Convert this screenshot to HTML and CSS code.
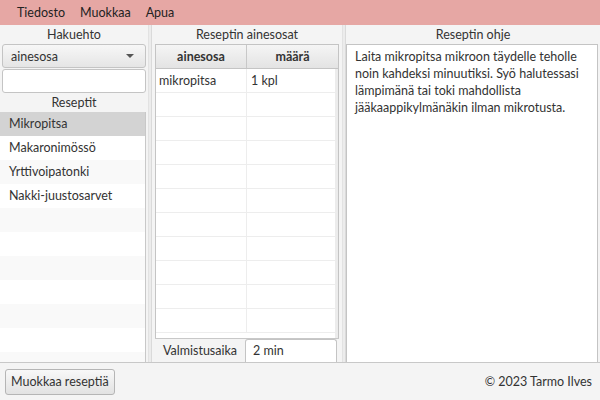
FILE: index.html
```html
<!DOCTYPE html>
<html lang="fi">
<head>
<meta charset="utf-8">
<title>Reseptit</title>
<link rel="stylesheet" href="styles.css">
</head>
<body>
<div class="app">
  <nav class="menubar">
    <span class="menu">Tiedosto</span>
    <span class="menu">Muokkaa</span>
    <span class="menu">Apua</span>
  </nav>
  <div class="split">
    <section class="pane pane-left">
      <div class="label">Hakuehto</div>
      <div class="combo"><span>ainesosa</span><span class="arrow"></span></div>
      <div class="field"></div>
      <div class="label">Reseptit</div>
      <ul class="list">
        <li class="sel">Mikropitsa</li>
        <li>Makaronimössö</li>
        <li>Yrttivoipatonki</li>
        <li>Nakki-juustosarvet</li>
        <li></li><li></li><li></li><li></li><li></li><li></li><li></li>
      </ul>
    </section>
    <div class="divider"></div>
    <section class="pane pane-mid">
      <div class="label">Reseptin ainesosat</div>
      <div class="table">
        <div class="thead">
          <div class="th">ainesosa</div>
          <div class="th">määrä</div>
        </div>
        <div class="tbody">
          <div class="tr"><div class="td">mikropitsa</div><div class="td">1 kpl</div></div>
          <div class="tr"><div class="td"></div><div class="td"></div></div>
          <div class="tr"><div class="td"></div><div class="td"></div></div>
          <div class="tr"><div class="td"></div><div class="td"></div></div>
          <div class="tr"><div class="td"></div><div class="td"></div></div>
          <div class="tr"><div class="td"></div><div class="td"></div></div>
          <div class="tr"><div class="td"></div><div class="td"></div></div>
          <div class="tr"><div class="td"></div><div class="td"></div></div>
          <div class="tr"><div class="td"></div><div class="td"></div></div>
          <div class="tr"><div class="td"></div><div class="td"></div></div>
          <div class="tr"><div class="td"></div><div class="td"></div></div>
        </div>
      </div>
      <div class="timerow">
        <div class="timelabel">Valmistusaika</div>
        <div class="timefield">2 min</div>
      </div>
    </section>
    <div class="divider"></div>
    <section class="pane pane-right">
      <div class="label">Reseptin ohje</div>
      <div class="textarea">Laita mikropitsa mikroon täydelle teholle noin kahdeksi minuutiksi. Syö halutessasi lämpimänä tai toki mahdollista jääkaappikylmänäkin ilman mikrotusta.</div>
    </section>
  </div>
  <footer class="bottombar">
    <button class="btn">Muokkaa reseptiä</button>
    <span class="copy">© 2023 Tarmo Ilves</span>
  </footer>
</div>
</body>
</html>
```

FILE: styles.css
```css
* { box-sizing: border-box; }
html, body { margin: 0; padding: 0; }
body {
  font-family: "Lato", "Open Sans", sans-serif;
  font-size: 12.5px;
  color: #333;
  background: #f4f4f4;
}
.app {
  width: 600px;
  height: 400px;
  display: flex;
  flex-direction: column;
  overflow: hidden;
}
.menubar {
  height: 25px;
  background: #e6a7a4;
  display: flex;
  align-items: center;
  padding-left: 10px;
}
.menu {
  padding: 0 7px;
  margin-right: 1px;
  color: #222;
}
.split {
  height: 338px;
  display: flex;
  border-bottom: 1px solid #c8c8c8;
}
.divider {
  width: 4px;
  background: #ececec;
  border-left: 1px solid #e2e2e2;
  border-right: 1px solid #dadada;
}
.pane {
  display: flex;
  flex-direction: column;
  min-width: 0;
}
.pane-left { width: 148px; }
.pane-mid { width: 190px; }
.pane-right { flex: 1; }
.label {
  height: 19px;
  line-height: 19px;
  text-align: center;
  color: #333;
  flex: none;
}
.combo {
  margin: 0 2px;
  height: 24px;
  border: 1px solid #c4c4c4;
  border-radius: 3px;
  background: linear-gradient(#f7f7f7, #e5e5e5);
  display: flex;
  align-items: center;
  justify-content: space-between;
  padding: 0 8px;
  flex: none;
}
.arrow {
  width: 0;
  height: 0;
  border-left: 4px solid transparent;
  border-right: 4px solid transparent;
  border-top: 4px solid #555;
  margin-right: 3px;
}
.field {
  margin: 1px 2px 0;
  height: 24px;
  border: 1px solid #c4c4c4;
  border-radius: 3px;
  background: #fff;
  flex: none;
}
.list {
  list-style: none;
  margin: 0 2px 0 0;
  padding: 0;
  flex: 1;
  overflow: hidden;
  border-right: 1px solid #c8c8c8;
  background: #fff;
}
.list li {
  height: 24px;
  line-height: 24px;
  padding-left: 9px;
  color: #333;
}
.list li:nth-child(odd) { background: #f9f9f9; }
.list li.sel { background: #d3d3d3; }
.table {
  margin: 0 3px;
  flex: 1;
  display: flex;
  flex-direction: column;
  border: 1px solid #c4c4c4;
  border-bottom: none;
  background: #fff;
  overflow: hidden;
}
.thead {
  display: grid;
  grid-template-columns: 90px 1fr;
  height: 24px;
  flex: none;
  background: linear-gradient(#f5f5f5, #e3e3e3);
  border-bottom: 1px solid #c4c4c4;
}
.th {
  font-weight: bold;
  text-align: center;
  line-height: 23px;
  color: #333;
}
.th + .th { border-left: 1px solid #c8c8c8; }
.tbody {
  flex: 1;
  overflow: hidden;
  border-right: 3px solid #ececec;
}
.tr {
  display: grid;
  grid-template-columns: 90px 1fr;
  height: 24px;
  border-bottom: 1px solid #ededed;
}
.td {
  line-height: 23px;
  padding-left: 3px;
  color: #333;
}
.td + .td { border-left: 1px solid #ededed; padding-left: 4px; }
.timerow {
  display: flex;
  height: 24px;
  flex: none;
  margin: 0 3px;
  border-top: 1px solid #c8c8c8;
}
.timelabel {
  width: 90px;
  line-height: 23px;
  padding-left: 8px;
  color: #333;
}
.timefield {
  flex: 1;
  margin-right: 2px;
  background: #fff;
  border: 1px solid #c4c4c4;
  border-radius: 3px 3px 0 0;
  border-bottom: none;
  line-height: 22px;
  padding-left: 7px;
}
.textarea {
  flex: 1;
  margin-right: 2px;
  border: 1px solid #c4c4c4;
  border-bottom: none;
  background: #fff;
  padding: 3px 10px 0 8px;
  line-height: 17px;
  color: #333;
}
.bottombar {
  flex: 1;
  display: flex;
  align-items: center;
  justify-content: space-between;
  padding: 0 8px 0 5px;
}
.btn {
  font-family: inherit;
  font-size: 12.5px;
  color: #333;
  height: 26px;
  padding: 0 5px;
  border: 1px solid #b5b5b5;
  border-radius: 3px;
  background: linear-gradient(#f8f8f8, #e2e2e2);
}
.copy { color: #333; }
```
